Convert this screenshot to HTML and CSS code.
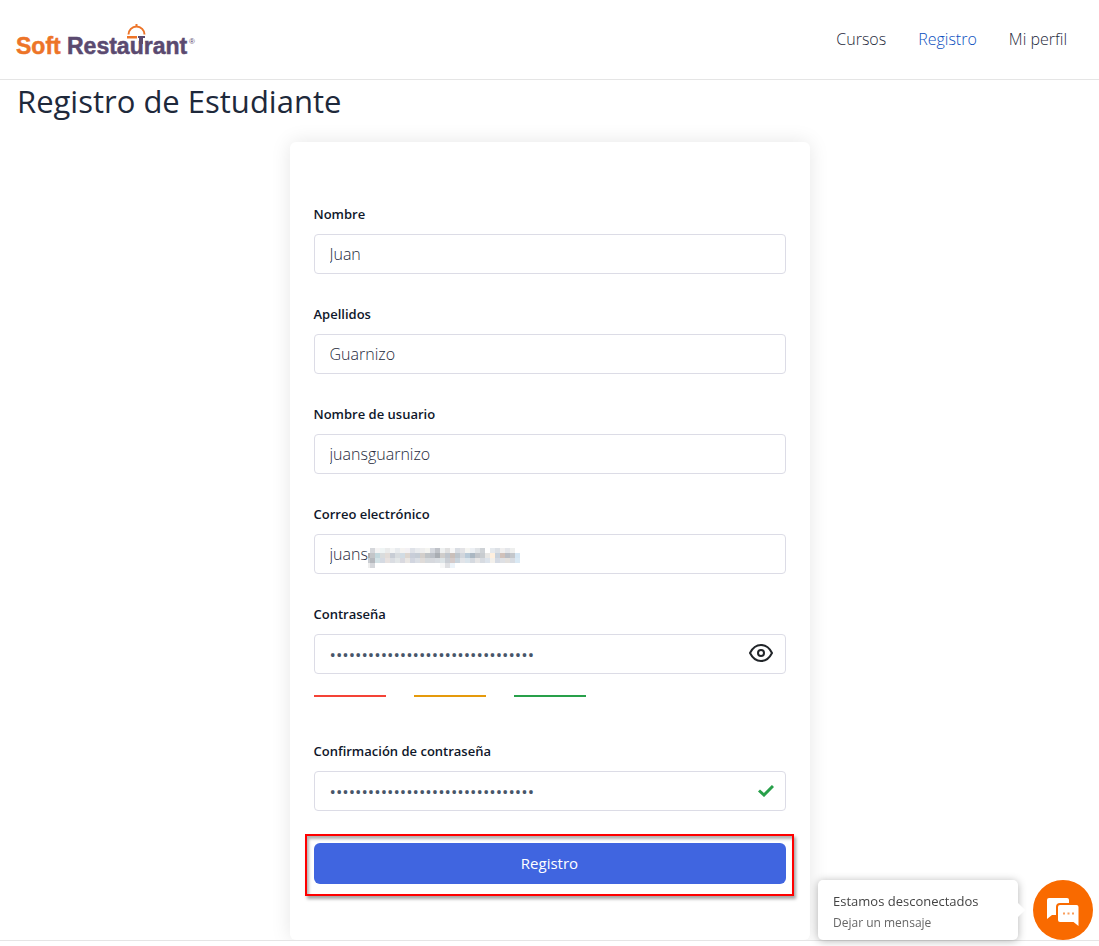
FILE: index.html
```
<!DOCTYPE html>
<html lang="es">
<head>
  <meta charset="UTF-8">
  <meta name="viewport" content="width=device-width, initial-scale=1.0">
  <title>Registro de Estudiante</title>
  <link rel="stylesheet" href="styles.css">
</head>
<body>
  <header class="site-header">
    <a href="#" class="logo" aria-label="Soft Restaurant">
      <svg width="182" height="36" viewBox="0 0 182 36">
        <text class="logo-soft" x="0" y="32">Soft</text>
        <text class="logo-rest" x="51" y="32">Restaurant</text>
        <text class="logo-mark" x="173" y="22">®</text>
        <path d="M112.500 12.500a8 8 0 0 1 16 0M120.500 2v3" fill="none" stroke="#ed7428" stroke-width="2"/>
        <path d="M111 14h10v2.500h-10z" fill="#ed7428"/>
        <path d="M122 14h7v2h-2v6h-4v-6h-1z" fill="#5b4a70"/>
      </svg>
    </a>
    <nav class="site-nav">
      <a href="#">Cursos</a>
      <a href="#" class="active">Registro</a>
      <a href="#">Mi perfil</a>
    </nav>
  </header>

  <main class="content">
    <h1>Registro de Estudiante</h1>

    <form class="card">
      <div class="field">
        <label for="nombre">Nombre</label>
        <input type="text" id="nombre" name="nombre" value="Juan">
      </div>
      <div class="field">
        <label for="apellidos">Apellidos</label>
        <input type="text" id="apellidos" name="apellidos" value="Guarnizo">
      </div>
      <div class="field">
        <label for="usuario">Nombre de usuario</label>
        <input type="text" id="usuario" name="usuario" value="juansguarnizo">
      </div>
      <div class="field">
        <label for="correo">Correo electrónico</label>
        <div class="control">
          <input type="text" id="correo" name="correo" value="juans">
          <svg class="mosaic" id="mosaic" width="152" height="20" viewBox="0.6 0 30.4 4" shape-rendering="crispEdges" aria-hidden="true"></svg>
        </div>
      </div>
      <div class="field">
        <label for="clave">Contraseña</label>
        <div class="control">
          <input type="password" id="clave" name="clave" value="abcdefghijklmnopqrstuvwxyz123456">
          <button type="button" class="toggle" aria-label="Mostrar contraseña">
            <svg width="26" height="20" viewBox="0 0 26 20" fill="none" stroke="#212529" stroke-width="2">
              <path d="M2 10C4.500 5 8.500 2 13 2s8.500 3 11 8c-2.500 5-6.500 8-11 8S4.500 15 2 10z" stroke-linejoin="round"/>
              <circle cx="13" cy="10" r="3"/>
            </svg>
          </button>
        </div>
        <div class="strength">
          <span class="weak"></span>
          <span class="medium"></span>
          <span class="strong"></span>
        </div>
      </div>
      <div class="field">
        <label for="confirmar">Confirmación de contraseña</label>
        <div class="control">
          <input type="password" id="confirmar" name="confirmar" value="abcdefghijklmnopqrstuvwxyz123456">
          <svg class="check" width="16" height="12" viewBox="0 0 16 12" fill="none" stroke="#28a04a" stroke-width="3">
            <path d="M1 5.500l5 4.500 9-9"/>
          </svg>
        </div>
      </div>
      <div class="submit">
        <button type="submit">Registro</button>
      </div>
    </form>
  </main>

  <footer class="site-footer"></footer>

  <aside class="chat">
    <div class="chat-bubble">
      <p class="chat-title">Estamos desconectados</p>
      <p class="chat-text">Dejar un mensaje</p>
    </div>
    <button type="button" class="chat-button" aria-label="Dejar un mensaje">
      <svg width="32" height="28" viewBox="0 0 32 28">
        <path d="M2 0h18a2 2 0 0 1 2 2v3H13a4 4 0 0 0-4 4v8H5l-5 4V2a2 2 0 0 1 2-2z" fill="#fff"/>
        <path d="M13 7h16.500a2 2 0 0 1 2 2v19l-5-4H13a2 2 0 0 1-2-2V9a2 2 0 0 1 2-2z" fill="#fff"/>
        <path d="M16 14.500h2v2h-2zM20.500 14.500h2v2h-2zM25 14.500h2v2h-2z" fill="#fa9d5b"/>
      </svg>
    </button>
  </aside>

  <script src="script.js"></script>
</body>
</html>
```
FILE: styles.css
```
* { box-sizing: border-box; }
body { margin: 0; font-family: "Segoe UI", "Open Sans", sans-serif; font-size: 16px; color: #1e293b; background: #fff; }

.site-header { display: flex; justify-content: space-between; align-items: center; height: 80px; padding: 0 32px 0 16px; border-bottom: 1px solid #e5e5e5; }
.logo { display: flex; }
.logo text { font-family: "Liberation Sans", Arial, sans-serif; font-weight: bold; font-size: 23px; }
.logo .logo-soft { fill: #ed7428; stroke: #ed7428; stroke-width: 0.5px; }
.logo .logo-rest { fill: #5b4a70; stroke: #5b4a70; stroke-width: 0.5px; }
.logo .logo-mark { fill: #5b4a70; font-size: 8px; font-weight: normal; }
.site-nav { display: flex; gap: 32px; padding-bottom: 2px; }
.site-nav a { color: #1e293b; text-decoration: none; font-weight: 300; line-height: 24px; }
.site-nav .active { color: #0a4fc0; }

.content { padding: 0 17px; }
h1 { margin: 0; font-size: 31px; font-weight: 500; line-height: 42px; }

.card { max-width: 520px; margin: 20px auto 0; padding: 62px 24px 56px; background: #fff; border-radius: 6px; box-shadow: 0 0 20px rgba(0, 0, 0, 0.1); }
.field { margin-bottom: 30px; }
.field label { display: block; margin-bottom: 10px; font-size: 13px; font-weight: 600; line-height: 20px; color: #0f172a; }
.control { position: relative; }
.field input { display: block; width: 100%; height: 40px; padding: 0 15px; border: 1px solid #dcdce6; border-radius: 4px; background: #fff; font-family: inherit; font-size: 16px; font-weight: 300; color: #1e293b; outline: none; }
.field input[type="password"] { font-size: 17px; font-weight: 400; color: #475569; }
.mosaic { position: absolute; top: 14px; left: 54px; }
.toggle { position: absolute; top: 9px; right: 12px; display: flex; padding: 0; border: 0; background: none; cursor: pointer; }
.check { position: absolute; top: 14px; right: 12px; }

.strength { display: flex; gap: 28px; margin: 21px 0 44px; }
.strength span { width: 72px; height: 2px; }
.weak { background: #f44336; }
.medium { background: #e59a0c; }
.strong { background: #28a04a; }

.submit { position: relative; margin-top: 32px; }
.submit::before { content: ""; position: absolute; inset: -9px -8px -12px -9px; border: 2px solid #f00; box-shadow: 2px 3px 3px rgba(0, 0, 0, 0.35), inset 2px 3px 3px rgba(0, 0, 0, 0.3); pointer-events: none; }
.submit button { position: relative; display: block; width: 100%; height: 41px; padding: 0 0 2px; border: 0; border-radius: 6px; background: #4065e0; color: #fff; font-family: inherit; font-size: 15px; cursor: pointer; }

.site-footer { border-top: 1px solid #e5e5e5; }

.chat { position: fixed; right: 6px; bottom: 6px; display: flex; gap: 15px; }
.chat-bubble { position: relative; width: 200px; height: 60px; padding: 11px 15px; border-radius: 5px; background: #fff; box-shadow: 0 1px 8px rgba(0, 0, 0, 0.3); }
.chat-bubble::after { content: ""; position: absolute; top: 25px; right: -5px; width: 10px; height: 10px; background: #fff; transform: rotate(45deg); }
.chat-bubble p { margin: 0; }
.chat-title { font-size: 13px; line-height: 20px; color: #444; }
.chat-text { font-size: 12px; line-height: 24px; color: #666; }
.chat-button { display: flex; align-items: center; justify-content: center; width: 60px; height: 60px; padding: 4px 0 0; border: 0; border-radius: 50%; background: #f96a00; cursor: pointer; }
```
FILE: script.js
```
// Hidden part of the e-mail address, one colour per tile
const rows = [
  "fff d5d7db f5f4f4 eff4f4 eaebeb f4f5f5 e8ebee f5f3f1 f3f1f4 dfe2e8 e9ebee eeeeee f4f4f0 d5d8de bfc2c8 eef0f0 e0e0e0 f7f7f7 d9dde3 e3e3e6 f5f5f2 eceff3 e0e3e6 ced2d6 fff e6eaee dde1e6 f0efef e4e6ea eeefee fff",
  "b5afac c3c5c8 c4d8dd d9dcdd e2dcd8 c8cdd5 d8dcdf d2dce4 ddd6d0 c8cdd8 c5ccd5 d3cfcb c0c4c7 bbbfc6 a9adb3 cfcdcb bfc5cc c9bfba bdc5cc d2d6dc b9cad8 abb7c2 c2c5ca c8ccd0 e8e7e5 fff0df c9d2dc d0c1ba b9bdc4 c4c7cb d5e6f3",
  "c9ccd1 b5b8bd d3e2e6 d5dae2 e7e1df dadde2 e2e6e7 d9d9df e9e6e3 d1d5df dadee4 dfdbd8 d5d9dc d6d8dd d8dce1 dce3e6 c9cdd3 d4cac9 c8d3dc e2e4e8 dae4eb d5d9df e6e5e5 d7dbe1 dce3eb f3f0eb d5dae3 dee0e4 e3e0dd d8dce2 dae9f4",
  "eeeeee d5d7db fff fff fff fff fff fff fff fff fff fff fff fff fff f7f7f7 dedfe2 edf4fa"
];

const mosaic = document.getElementById("mosaic");

rows.forEach((row, y) => {
  row.split(" ").forEach((color, x) => {
    const tile = document.createElementNS("http://www.w3.org/2000/svg", "rect");
    tile.setAttribute("x", x);
    tile.setAttribute("y", y);
    tile.setAttribute("width", 1);
    tile.setAttribute("height", 1);
    tile.setAttribute("fill", "#" + color);
    mosaic.appendChild(tile);
  });
});
```
